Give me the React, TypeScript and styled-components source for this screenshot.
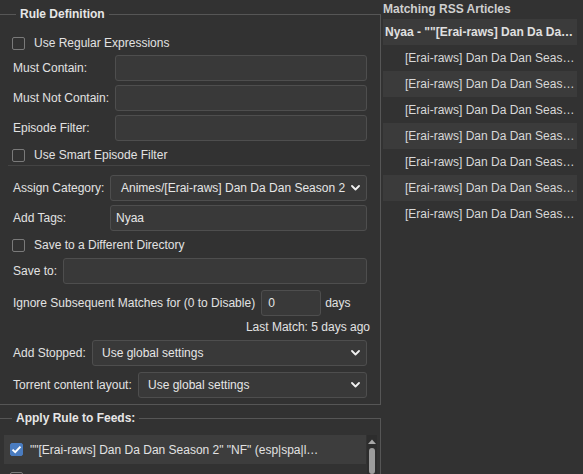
import React from "react";
import styled, { createGlobalStyle } from "styled-components";

const Global = createGlobalStyle`
  html, body { margin: 0; padding: 0; background: #323232; }
  body {
    font-family: "Liberation Sans", Arial, sans-serif;
    font-size: 12px;
    color: #e2e2e2;
    overflow: hidden;
  }
  * { box-sizing: border-box; }
`;

const Page = styled.div`
  display: flex;
  align-items: flex-start;
  width: 583px;
  height: 474px;
  overflow: hidden;
  background: #323232;
`;

const LeftCol = styled.div`
  width: 381px;
  flex: none;
  display: flex;
  flex-direction: column;
`;

const Fieldset = styled.fieldset<{ $mt: number; $pl: number; $pr: number; $pb: number }>`
  margin: ${(p) => p.$mt}px 0 0 0;
  border: 1px solid #565656;
  border-left: none;
  padding: 0 ${(p) => p.$pr}px ${(p) => p.$pb}px ${(p) => p.$pl}px;
  min-width: 0;
`;

const Legend = styled.legend<{ $ml: number }>`
  margin-left: ${(p) => p.$ml}px;
  padding: 0 4px;
  font-weight: bold;
  line-height: 14px;
  height: 14px;
  color: #e6e6e6;
`;

const Body = styled.div`
  display: flex;
  flex-direction: column;
`;

const Row = styled.div<{ $mt: number; $h?: number }>`
  display: flex;
  align-items: center;
  gap: 6px;
  margin-top: ${(p) => p.$mt}px;
  height: ${(p) => p.$h ?? 26}px;
  white-space: nowrap;
`;

const Label = styled.span<{ $w?: number }>`
  flex: none;
  width: ${(p) => (p.$w ? `${p.$w}px` : "auto")};
  padding-left: 1px;
  white-space: nowrap;
`;

const Box = styled.span<{ $checked?: boolean }>`
  flex: none;
  width: 13px;
  height: 13px;
  border-radius: 2px;
  border: 1px solid ${(p) => (p.$checked ? "#4a7cc0" : "#7a7a7a")};
  background: ${(p) => (p.$checked ? "#4a7cc0" : "transparent")};
  display: flex;
  align-items: center;
  justify-content: center;
`;

const CheckText = styled.span`
  margin-left: 3px;
`;

const Field = styled.div<{ $w?: number; $pl?: number }>`
  flex: ${(p) => (p.$w ? "none" : "1")};
  width: ${(p) => (p.$w ? `${p.$w}px` : "auto")};
  height: 26px;
  background: #393939;
  border: 1px solid #4e4e4e;
  border-radius: 3px;
  display: flex;
  align-items: center;
  justify-content: space-between;
  padding: 0 6px 0 ${(p) => p.$pl ?? 5}px;
  color: #e6e6e6;
  overflow: hidden;
  white-space: nowrap;
`;

const Separator = styled.div`
  margin: 3px -3px 0 -4px;
  height: 1px;
  background: #444;
`;

const Days = styled.span`
  margin-left: -2px;
`;

const LastMatch = styled.div`
  margin-top: 4px;
  margin-right: -3px;
  height: 14px;
  line-height: 14px;
  text-align: right;
`;

const FeedArea = styled.div`
  display: flex;
  margin-top: 10px;
  height: 60px;
`;

const FeedList = styled.div`
  flex: 1;
  display: flex;
  flex-direction: column;
`;

const FeedRow = styled.div<{ $sel?: boolean }>`
  height: 29px;
  flex: none;
  display: flex;
  align-items: center;
  gap: 7px;
  padding-left: 6px;
  background: ${(p) => (p.$sel ? "#3d3d3d" : "transparent")};
`;

const FeedText = styled.span`
  max-width: 289px;
  overflow: hidden;
  text-overflow: ellipsis;
  white-space: nowrap;
`;

const Scrollbar = styled.div`
  width: 10px;
  margin-left: 1px;
  flex: none;
  display: flex;
  flex-direction: column;
  align-items: center;
  background: #2d2d2d;
  padding-top: 4px;
`;

const Thumb = styled.div`
  margin-top: 4px;
  width: 6px;
  height: 26px;
  border-radius: 3px;
  background: #9c9c9c;
`;

const RightCol = styled.div`
  margin-left: 2px;
  width: 194px;
  flex: none;
  display: flex;
  flex-direction: column;
`;

const Title = styled.div`
  margin-top: 2px;
  height: 14px;
  line-height: 14px;
  font-weight: bold;
  color: #cfcfcf;
`;

const Articles = styled.div`
  margin-top: 3px;
  display: flex;
  flex-direction: column;
`;

const Article = styled.div<{ $head?: boolean; $alt?: boolean }>`
  height: 26px;
  line-height: 26px;
  padding: 0 2px 0 ${(p) => (p.$head ? 2 : 22)}px;
  font-weight: ${(p) => (p.$head ? "bold" : "normal")};
  background: ${(p) => (p.$alt ? "#3b3b3b" : "transparent")};
  color: ${(p) => (p.$head ? "#e0e0e0" : "#d8d8d8")};
  white-space: nowrap;
  overflow: hidden;
  text-overflow: ellipsis;
`;

const Chevron = () => (
  <svg width="9" height="6" viewBox="0 0 9 6" style={{ flex: "none" }}>
    <path d="M1 1 L4.5 4.5 L8 1" fill="none" stroke="#f0f0f0" strokeWidth="1.8" strokeLinecap="round" strokeLinejoin="round" />
  </svg>
);

const Tick = () => (
  <svg width="11" height="9" viewBox="0 0 11 9">
    <path d="M1.5 4.6 L4.2 7.2 L9.5 1.6" fill="none" stroke="#fff" strokeWidth="2" />
  </svg>
);

const UpArrow = () => (
  <svg width="8" height="5" viewBox="0 0 8 5">
    <path d="M0 5 L4 0.5 L8 5 Z" fill="#a8a8a8" />
  </svg>
);

const Check = ({ label, mt, checked }: { label: string; mt: number; checked?: boolean }) => (
  <Row $mt={mt} $h={14}>
    <Box $checked={checked}>{checked && <Tick />}</Box>
    <CheckText>{label}</CheckText>
  </Row>
);

const articleRows = Array.from({ length: 7 }, (_, i) =>
  `[Erai-raws] Dan Da Dan Season 2 - 0${7 - i} [1080p CR WEBRip HEVC EAC3][MultiSub]`
);

export default function App() {
  return (
    <>
      <Global />
      <Page>
        <LeftCol>
          <Fieldset $mt={7} $pl={12} $pr={13} $pb={6}>
            <Legend $ml={4}>Rule Definition</Legend>
            <Body>
              <Check label="Use Regular Expressions" mt={15} />
              <Row $mt={5}>
                <Label $w={97}>Must Contain:</Label>
                <Field />
              </Row>
              <Row $mt={4}>
                <Label $w={97}>Must Not Contain:</Label>
                <Field />
              </Row>
              <Row $mt={4}>
                <Label $w={97}>Episode Filter:</Label>
                <Field />
              </Row>
              <Check label="Use Smart Episode Filter" mt={7} />
              <Separator />
              <Row $mt={9}>
                <Label $w={92}>Assign Category:</Label>
                <Field $pl={10}>
                  <span>Animes/[Erai-raws] Dan Da Dan Season 2</span>
                  <Chevron />
                </Field>
              </Row>
              <Row $mt={4}>
                <Label $w={92}>Add Tags:</Label>
                <Field>Nyaa</Field>
              </Row>
              <Check label="Save to a Different Directory" mt={7} />
              <Row $mt={6}>
                <Label $w={45}>Save to:</Label>
                <Field />
              </Row>
              <Row $mt={6}>
                <Label>Ignore Subsequent Matches for (0 to Disable)</Label>
                <Field $w={60} $pl={6}>0</Field>
                <Days>days</Days>
              </Row>
              <LastMatch>Last Match: 5 days ago</LastMatch>
              <Row $mt={6}>
                <Label $w={74}>Add Stopped:</Label>
                <Field $pl={9}>
                  <span>Use global settings</span>
                  <Chevron />
                </Field>
              </Row>
              <Row $mt={6}>
                <Label $w={120}>Torrent content layout:</Label>
                <Field $pl={9}>
                  <span>Use global settings</span>
                  <Chevron />
                </Field>
              </Row>
            </Body>
          </Fieldset>
          <Fieldset $mt={6} $pl={4} $pr={3} $pb={0}>
            <Legend $ml={8}>Apply Rule to Feeds:</Legend>
            <FeedArea>
              <FeedList>
                <FeedRow $sel>
                  <Box $checked><Tick /></Box>
                  <FeedText>""[Erai-raws] Dan Da Dan Season 2" "NF" (esp|spa|lat|por|pt-br)"</FeedText>
                </FeedRow>
                <FeedRow>
                  <Box />
                </FeedRow>
              </FeedList>
              <Scrollbar>
                <UpArrow />
                <Thumb />
              </Scrollbar>
            </FeedArea>
          </Fieldset>
        </LeftCol>
        <RightCol>
          <Title>Matching RSS Articles</Title>
          <Articles>
            <Article $head $alt>Nyaa - ""[Erai-raws] Dan Da Dan Season 2" "NF" (esp|spa|lat)"</Article>
            {articleRows.map((t, i) => (
              <Article key={i} $alt={i % 2 === 1}>{t}</Article>
            ))}
          </Articles>
        </RightCol>
      </Page>
    </>
  );
}
